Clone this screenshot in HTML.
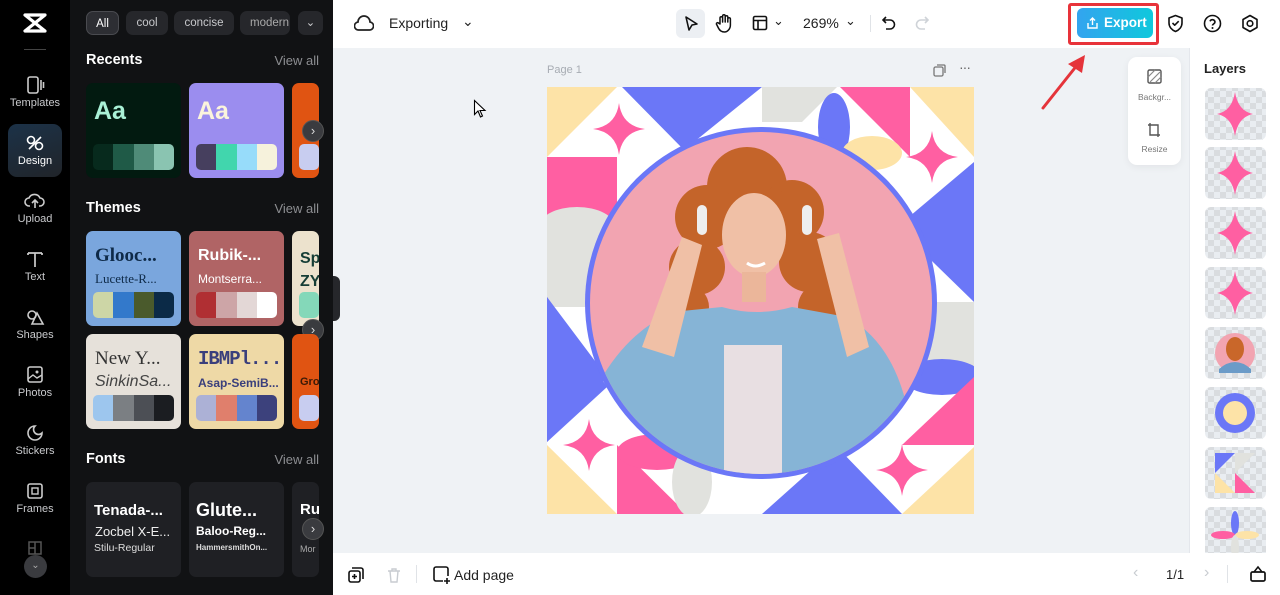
<!DOCTYPE html>
<html><head><meta charset="utf-8"><style>
*{margin:0;padding:0;box-sizing:border-box}
body{width:1280px;height:595px;overflow:hidden;font-family:"Liberation Sans",sans-serif;background:#eff2f5;position:relative}
.abs{position:absolute}
.rail{left:0;top:0;width:70px;height:595px;background:#000}
.ri{position:absolute;left:0;width:70px;text-align:center;color:#c9cacd;font-size:11px}
.ri svg{display:block;margin:0 auto 3px}
.panel{left:70px;top:0;width:263px;height:595px;background:#111214;overflow:hidden}
.chip{position:absolute;top:11px;height:24px;border-radius:7px;background:#26272b;color:#c8c9cc;font-size:11.5px;line-height:24px;text-align:center}
.h{position:absolute;left:16px;color:#fff;font-weight:bold;font-size:14.5px}
.va{position:absolute;right:14px;color:#8d8e92;font-size:13px}
.card{position:absolute;width:95px;height:95px;border-radius:7px;overflow:hidden}
.pal{position:absolute;left:7px;right:7px;bottom:8px;height:26px;border-radius:5px;overflow:hidden;display:flex}
.pal i{flex:1}
.nb{position:absolute;width:22px;height:22px;border-radius:50%;background:#3a3b3f;border:1px solid #555;color:#ddd;font-size:13px;line-height:19px;text-align:center}
.top{left:333px;top:0;width:947px;height:48px;background:#fff}
.bot{left:333px;top:553px;width:947px;height:42px;background:#fff}
.layers{left:1189px;top:48px;width:91px;height:505px;background:#fff;border-left:1px solid #e4e7ec}
.th{position:absolute;left:15px;width:61px;height:52px;border-radius:6px;background-color:#e9edf1;background-image:linear-gradient(45deg,#d9dcdf 25%,transparent 25%,transparent 75%,#d9dcdf 75%),linear-gradient(45deg,#d9dcdf 25%,transparent 25%,transparent 75%,#d9dcdf 75%);background-size:12px 12px;background-position:3px 3px,9px 9px}
</style></head><body>

<div class="abs rail">
  <svg class="abs" style="left:22px;top:12px" width="26" height="22" viewBox="0 0 26 22"><path d="M3 3h20L3 19h20Z" fill="none" stroke="#fff" stroke-width="3.2" stroke-linejoin="round"/></svg>
  <div class="abs" style="left:24px;top:49px;width:22px;height:1px;background:#444"></div>
  <div class="ri" style="top:76px"><svg width="20" height="18" viewBox="0 0 20 18"><rect x="3" y="1" width="10" height="16" rx="2" fill="none" stroke="#ccc" stroke-width="1.6"/><path d="M16 4v10M18.5 6v6" stroke="#ccc" stroke-width="1.6"/></svg>Templates</div>
  <div class="abs" style="left:8px;top:124px;width:54px;height:53px;border-radius:9px;background:linear-gradient(160deg,#1c3248,#202429)"></div>
  <div class="ri" style="top:134px;color:#fff"><svg width="20" height="18" viewBox="0 0 20 18"><circle cx="6" cy="6" r="3.5" fill="none" stroke="#fff" stroke-width="1.6"/><circle cx="14" cy="12" r="3.5" fill="none" stroke="#fff" stroke-width="1.6"/><path d="M4 15L16 3" stroke="#fff" stroke-width="1.6"/></svg>Design</div>
  <div class="ri" style="top:192px"><svg width="22" height="18" viewBox="0 0 22 18"><path d="M6 14H5a4 4 0 0 1 0-8 6 6 0 0 1 11 0 4 4 0 0 1 0 8h-1M11 16V8M8 11l3-3 3 3" fill="none" stroke="#ccc" stroke-width="1.6"/></svg>Upload</div>
  <div class="ri" style="top:250px"><svg width="20" height="18" viewBox="0 0 20 18"><path d="M3 3h14M10 3v14M3 3v2M17 3v2" stroke="#ccc" stroke-width="1.7" fill="none"/></svg>Text</div>
  <div class="ri" style="top:308px"><svg width="20" height="18" viewBox="0 0 20 18"><circle cx="7" cy="7" r="4" fill="none" stroke="#ccc" stroke-width="1.6"/><path d="M12 5l6 11H7z" fill="none" stroke="#ccc" stroke-width="1.6"/></svg>Shapes</div>
  <div class="ri" style="top:366px"><svg width="20" height="18" viewBox="0 0 20 18"><rect x="3" y="1" width="14" height="15" rx="2" fill="none" stroke="#ccc" stroke-width="1.6"/><path d="M3 13l5-4 4 3 5-3" fill="none" stroke="#ccc" stroke-width="1.4"/><circle cx="12" cy="6" r="1.5" fill="#ccc"/></svg>Photos</div>
  <div class="ri" style="top:424px"><svg width="20" height="18" viewBox="0 0 20 18"><path d="M17 9a7 7 0 1 1-7-7 4 4 0 0 0 7 7z" fill="none" stroke="#ccc" stroke-width="1.6"/></svg>Stickers</div>
  <div class="ri" style="top:482px"><svg width="20" height="18" viewBox="0 0 20 18"><rect x="3" y="2" width="14" height="14" rx="2" fill="none" stroke="#ccc" stroke-width="1.6"/><rect x="7" y="6" width="6" height="6" fill="none" stroke="#ccc" stroke-width="1.4"/></svg>Frames</div>
  <svg class="abs" style="left:28px;top:541px" width="14" height="14"><rect x="1" y="1" width="12" height="12" fill="none" stroke="#555" stroke-width="1.5"/><path d="M7 1v12M1 7h6" stroke="#555" stroke-width="1.5"/></svg>
  <div class="abs" style="left:24px;top:555px;width:23px;height:23px;border-radius:50%;background:#3a3b3f;color:#aaa;text-align:center;font-size:10px;line-height:22px">&#8964;</div>
</div>

<div class="abs panel">
  <div class="chip" style="left:16px;width:33px;background:#2d2e33;border:1px solid #4a4b50;color:#fff">All</div>
  <div class="chip" style="left:56px;width:42px">cool</div>
  <div class="chip" style="left:104px;width:60px">concise</div>
  <div class="chip" style="left:170px;width:50px;text-align:left;padding-left:10px;overflow:hidden;color:#aaa">modern</div>
  <div class="chip" style="left:228px;width:25px">&#8964;</div>

  <div class="h" style="top:52px">Recents</div><div class="va" style="top:53px">View all</div>
  <div class="card" style="left:16px;top:83px;background:#021a10"><div style="position:absolute;left:8px;top:14px;color:#a9f1d6;font-weight:bold;font-size:25px">Aa</div><div class="pal"><i style="background:#072a1d"></i><i style="background:#1f5a47"></i><i style="background:#4f8b78"></i><i style="background:#8ac4b1"></i></div></div>
  <div class="card" style="left:119px;top:83px;background:#9b8def"><div style="position:absolute;left:8px;top:14px;color:#fbf4dc;font-weight:bold;font-size:25px">Aa</div><div class="pal"><i style="background:#463f5e"></i><i style="background:#41d6ad"></i><i style="background:#97dcfa"></i><i style="background:#f6f2dc"></i></div></div>
  <div class="card" style="left:222px;top:83px;background:#e05412;width:27px"><div class="pal" style="right:0"><i style="background:#c8cdf0"></i></div></div>
  <div class="nb" style="left:232px;top:120px">&#8250;</div>

  <div class="h" style="top:200px">Themes</div><div class="va" style="top:201px">View all</div>
  <div class="card" style="left:16px;top:231px;background:#7aa6dd"><div style="position:absolute;left:9px;top:14px;color:#0e2a48;font-family:'Liberation Serif',serif;font-weight:bold;font-size:19px">Glooc...</div><div style="position:absolute;left:9px;top:40px;color:#0e2a48;font-family:'Liberation Serif',serif;font-size:13px">Lucette-R...</div><div class="pal"><i style="background:#cdd6a6"></i><i style="background:#3379cb"></i><i style="background:#4a5a2c"></i><i style="background:#0b2a47"></i></div></div>
  <div class="card" style="left:119px;top:231px;background:#b06465"><div style="position:absolute;left:9px;top:16px;color:#fff;font-weight:bold;font-size:16px">Rubik-...</div><div style="position:absolute;left:9px;top:41px;color:#fff;font-size:12px">Montserra...</div><div class="pal"><i style="background:#b02f33"></i><i style="background:#cda5a7"></i><i style="background:#e3d7d6"></i><i style="background:#fff"></i></div></div>
  <div class="card" style="left:222px;top:231px;background:#ece2cd;width:27px"><div style="position:absolute;left:8px;top:16px;color:#153d35;font-weight:bold;font-size:16px;line-height:23px">Sp<br>ZY</div><div class="pal" style="right:0"><i style="background:#84d8b9"></i></div></div>
  <div class="nb" style="left:232px;top:319px">&#8250;</div>
  <div class="card" style="left:16px;top:334px;background:#e6e1da"><div style="position:absolute;left:9px;top:14px;color:#333;font-family:'Liberation Serif',serif;font-size:19px">New Y...</div><div style="position:absolute;left:9px;top:39px;color:#444;font-style:italic;font-size:16px">SinkinSa...</div><div class="pal"><i style="background:#9dc6ee"></i><i style="background:#7b7f83"></i><i style="background:#4c4f55"></i><i style="background:#1b1d21"></i></div></div>
  <div class="card" style="left:119px;top:334px;background:#eed9a6"><div style="position:absolute;left:9px;top:14px;color:#3a3f7c;font-weight:bold;font-size:19px;font-family:'Liberation Mono',monospace;letter-spacing:-1px">IBMPl...</div><div style="position:absolute;left:9px;top:42px;color:#3a3f7c;font-weight:bold;font-size:12px">Asap-SemiB...</div><div class="pal"><i style="background:#acb1d6"></i><i style="background:#e07f6c"></i><i style="background:#6484ce"></i><i style="background:#3c417c"></i></div></div>
  <div class="card" style="left:222px;top:334px;background:#e05412;width:27px"><div style="position:absolute;left:8px;top:42px;color:#3a1a07;font-weight:bold;font-size:11px">Gro</div><div class="pal" style="right:0"><i style="background:#c8cdf0"></i></div></div>

  <div class="h" style="top:451px">Fonts</div><div class="va" style="top:452px">View all</div>
  <div class="card" style="left:16px;top:482px;background:#1f2024"><div style="position:absolute;left:8px;top:20px;color:#fff;font-weight:bold;font-size:15px">Tenada-...</div><div style="position:absolute;left:9px;top:42px;color:#eee;font-size:13px">Zocbel X-E...</div><div style="position:absolute;left:8px;top:60px;color:#ddd;font-size:10.5px">Stilu-Regular</div></div>
  <div class="card" style="left:119px;top:482px;background:#1f2024"><div style="position:absolute;left:7px;top:18px;color:#fff;font-weight:bold;font-size:18px">Glute...</div><div style="position:absolute;left:7px;top:42px;color:#fff;font-weight:bold;font-size:12px">Baloo-Reg...</div><div style="position:absolute;left:7px;top:61px;color:#ddd;font-weight:bold;font-size:8px">HammersmithOn...</div></div>
  <div class="card" style="left:222px;top:482px;background:#1f2024;width:27px"><div style="position:absolute;left:8px;top:19px;color:#fff;font-weight:bold;font-size:15px">Ru</div><div style="position:absolute;left:8px;top:62px;color:#aaa;font-size:9px">Mor</div></div>
  <div class="nb" style="left:232px;top:518px">&#8250;</div>
</div>
<div class="abs" style="left:333px;top:276px;width:7px;height:45px;background:#26272b;border-radius:0 6px 6px 0"></div>

<div class="abs top">
  <svg class="abs" style="left:21px;top:14px" width="20" height="18" viewBox="0 0 20 18"><path d="M5 16a4 4 0 0 1-1-8 6 6 0 0 1 12 0 4 4 0 0 1-1 8z" fill="none" stroke="#222" stroke-width="1.7"/></svg>
  <div class="abs" style="left:56px;top:15px;font-size:14px;color:#222">Exporting</div>
  <div class="abs" style="left:129px;top:13px;font-size:14px;color:#222">&#8964;</div>
  <div class="abs" style="left:343px;top:9px;width:29px;height:29px;border-radius:6px;background:#eceff3"></div>
  <svg class="abs" style="left:350px;top:15px" width="16" height="17" viewBox="0 0 16 17"><path d="M3 2l11 7-5 1-3 5z" fill="none" stroke="#111" stroke-width="1.6" stroke-linejoin="round"/></svg>
  <svg class="abs" style="left:382px;top:13px" width="18" height="20" viewBox="0 0 18 20"><path d="M5 11V5a1.3 1.3 0 0 1 2.6 0v4-6a1.3 1.3 0 0 1 2.6 0v6-5a1.3 1.3 0 0 1 2.6 0v5-3a1.3 1.3 0 0 1 2.6 0v6c0 4-3 7-6 7s-5-2-6-4l-2-4a1.2 1.2 0 0 1 2-1z" fill="none" stroke="#111" stroke-width="1.5" stroke-linejoin="round"/></svg>
  <svg class="abs" style="left:419px;top:15px" width="16" height="16" viewBox="0 0 16 16"><rect x="1.5" y="1.5" width="13" height="13" rx="1.5" fill="none" stroke="#111" stroke-width="1.6"/><path d="M1.5 5.5h13M6 5.5v9" stroke="#111" stroke-width="1.6"/></svg>
  <div class="abs" style="left:440px;top:13px;font-size:13px;color:#222">&#8964;</div>
  <div class="abs" style="left:470px;top:15px;font-size:14px;color:#222">269%</div>
  <div class="abs" style="left:512px;top:13px;font-size:13px;color:#222">&#8964;</div>
  <div class="abs" style="left:537px;top:15px;width:1px;height:17px;background:#e0e3e7"></div>
  <svg class="abs" style="left:548px;top:15px" width="16" height="16" viewBox="0 0 16 16"><path d="M5 2L2 5l3 3M2 5h7a4.5 4.5 0 0 1 0 9H5" fill="none" stroke="#111" stroke-width="1.6"/></svg>
  <svg class="abs" style="left:581px;top:15px" width="16" height="16" viewBox="0 0 16 16"><path d="M11 2l3 3-3 3M14 5H7a4.5 4.5 0 0 0 0 9h4" fill="none" stroke="#cfd3d8" stroke-width="1.6"/></svg>
  <div class="abs" style="left:735px;top:3px;width:91px;height:42px;border:3px solid #e8333a;border-radius:3px"></div>
  <div class="abs" style="left:744px;top:8px;width:76px;height:30px;border-radius:6px;background:linear-gradient(90deg,#33a4ef,#0fc8dc);color:#fff;font-weight:bold;font-size:13.5px;line-height:30px;padding-left:27px">Export</div>
  <svg class="abs" style="left:753px;top:16px" width="13" height="14" viewBox="0 0 13 14"><path d="M6.5 9V2M4 4.5l2.5-2.5L9 4.5M2 7v5h9V7" fill="none" stroke="#fff" stroke-width="1.4"/></svg>
  <svg class="abs" style="left:834px;top:14px" width="17" height="19" viewBox="0 0 17 19"><path d="M8.5 1.5l6.5 2.5v5c0 4-3 7-6.5 8.5C5 16 2 13 2 9V4z M5.5 9l2.2 2.2 4-4" fill="none" stroke="#111" stroke-width="1.6" stroke-linejoin="round"/></svg>
  <svg class="abs" style="left:870px;top:14px" width="19" height="19" viewBox="0 0 19 19"><circle cx="9.5" cy="9.5" r="8" fill="none" stroke="#111" stroke-width="1.6"/><path d="M7 7.3a2.6 2.6 0 0 1 5 .7c0 1.7-2.5 2-2.5 3.5" fill="none" stroke="#111" stroke-width="1.6"/><circle cx="9.5" cy="14" r="1" fill="#111"/></svg>
  <svg class="abs" style="left:908px;top:14px" width="18" height="19" viewBox="0 0 18 19"><path d="M9 1.5l7 4v8l-7 4-7-4v-8z" fill="none" stroke="#111" stroke-width="1.6" stroke-linejoin="round"/><circle cx="9" cy="9.5" r="2.8" fill="none" stroke="#111" stroke-width="1.6"/></svg>
</div>

<div class="abs" style="left:547px;top:64px;font-size:11px;color:#a7acb3">Page 1</div>
<svg class="abs" style="left:933px;top:64px" width="13" height="13" viewBox="0 0 13 13"><rect x="1" y="3" width="9" height="9" rx="1.5" fill="none" stroke="#777" stroke-width="1.3"/><path d="M4 1h7a1 1 0 0 1 1 1v7" fill="none" stroke="#777" stroke-width="1.3"/></svg>
<div class="abs" style="left:959px;top:59px;font-size:14px;color:#666;letter-spacing:-1px">&middot;&middot;&middot;</div>
<svg class="abs" style="left:473px;top:99px" width="14" height="20" viewBox="0 0 14 20"><path d="M1.5 1.5v14l3.5-3.5 2.5 6 2-1-2.5-5.5H12z" fill="#fff" stroke="#000" stroke-width="1.1"/></svg>
<svg class="abs" style="left:1038px;top:50px" width="52" height="64" viewBox="0 0 52 64"><path d="M5 58L40 14" stroke="#e5343a" stroke-width="3" stroke-linecap="round"/><path d="M47 5L30 14l14 9z" fill="#e5343a"/></svg>

<div class="abs" style="left:1128px;top:57px;width:53px;height:108px;background:#fff;border-radius:9px;box-shadow:0 2px 8px rgba(0,0,0,.06)"></div>
<svg class="abs" style="left:1147px;top:69px" width="15" height="15" viewBox="0 0 15 15"><rect x="1" y="1" width="13" height="13" rx="1.5" fill="none" stroke="#555" stroke-width="1.4"/><path d="M1 8l7-7M3 13l10-10M8 14l6-6" stroke="#888" stroke-width="1.2"/></svg>
<div class="abs" style="left:1130px;top:92px;width:49px;text-align:center;font-size:8.5px;color:#777">Backgr...</div>
<svg class="abs" style="left:1147px;top:122px" width="16" height="16" viewBox="0 0 16 16"><path d="M3 1v12h10M1 3h10v12" fill="none" stroke="#555" stroke-width="1.4"/></svg>
<div class="abs" style="left:1130px;top:144px;width:49px;text-align:center;font-size:8.5px;color:#777">Resize</div>

<svg class="abs" style="left:547px;top:87px" width="427" height="427" viewBox="0 0 427 427">
<defs>
 <path id="st" d="M0-26Q3-3 26 0Q3 3 0 26Q-3 3-26 0Q-3-3 0-26Z" fill="#ff5fa2"/>
 <clipPath id="cc"><circle cx="214" cy="216" r="171"/></clipPath>
</defs>
<rect width="427" height="427" fill="#fff"/>
<polygon points="0,0 70,0 0,70" fill="#fde3a7"/>
<polygon points="75,0 215,0 137,63" fill="#6b77f7"/>
<polygon points="215,0 290,0 255,35 215,35" fill="#e1e2de"/>
<polygon points="293,0 363,0 363,70" fill="#ff5fa2"/>
<polygon points="363,0 427,0 427,70" fill="#fde3a7"/>
<ellipse cx="287" cy="40" rx="16" ry="34" fill="#6b77f7"/>
<ellipse cx="325" cy="66" rx="30" ry="17" fill="#fde3a7"/>
<rect x="0" y="70" width="70" height="70" fill="#ff5fa2"/>
<ellipse cx="30" cy="140" rx="38" ry="20" fill="#e1e2de"/>
<rect x="0" y="145" width="55" height="75" fill="#e1e2de"/>
<polygon points="0,210 60,290 0,355" fill="#6b77f7"/>
<polygon points="0,210 0,355 60,300" fill="#6b77f7"/>
<polygon points="427,75 427,215 350,140" fill="#6b77f7"/>
<rect x="365" y="215" width="62" height="75" fill="#e1e2de"/>
<ellipse cx="395" cy="290" rx="40" ry="18" fill="#6b77f7"/>
<polygon points="427,290 427,358 355,358" fill="#ff5fa2"/>
<polygon points="0,358 0,427 70,427" fill="#fde3a7"/>
<polygon points="70,358 70,427 140,427" fill="#ff5fa2"/>
<ellipse cx="110" cy="365" rx="40" ry="18" fill="#ff5fa2"/>
<ellipse cx="145" cy="395" rx="20" ry="35" fill="#e1e2de"/>
<polygon points="215,427 355,427 290,360" fill="#6b77f7"/>
<polygon points="355,427 427,427 427,360" fill="#fde3a7"/>
<use href="#st" x="72" y="42"/><use href="#st" x="385" y="70"/><use href="#st" x="42" y="358"/><use href="#st" x="355" y="383"/>
<circle cx="214" cy="216" r="176" fill="#6b77f7"/>
<circle cx="214" cy="216" r="171" fill="#f2a4b1"/>
<g clip-path="url(#cc)">
 <g fill="#c4642a">
  <circle cx="200" cy="100" r="40"/><circle cx="160" cy="130" r="32"/><circle cx="245" cy="125" r="32"/>
  <circle cx="150" cy="180" r="28"/><circle cx="262" cy="175" r="30"/><circle cx="140" cy="220" r="22"/>
  <circle cx="275" cy="220" r="24"/><circle cx="170" cy="240" r="18"/><circle cx="250" cy="245" r="18"/>
 </g>
 <ellipse cx="207" cy="148" rx="32" ry="42" fill="#f0c0a6"/>
 <path d="M190 105q20-15 45 0q-5-25-25-25q-20 0-20 25z" fill="#c4642a"/>
 <path d="M195 185h24v30h-24z" fill="#ebb69a"/>
 <path d="M40 320q30-70 85-95l50-5q35 10 70 0l55 10q45 25 60 90v100H40z" fill="#86b4d6"/>
 <rect x="177" y="258" width="58" height="140" fill="#e8dfe2"/>
 <path d="M95 260l40-110 20 8-28 112z" fill="#f0c0a6"/>
 <path d="M300 270l-30-118 22-6 30 114z" fill="#f0c0a6"/>
 <rect x="150" y="118" width="10" height="30" rx="5" fill="#eee"/><rect x="255" y="118" width="10" height="30" rx="5" fill="#eee"/>
 <path d="M200 176q8 6 18 0" stroke="#fff" stroke-width="3" fill="none"/>
</g>
</svg>

<div class="abs layers">
  <div class="abs" style="left:14px;top:13px;font-size:13px;font-weight:bold;color:#222">Layers</div>
  <div class="th" style="top:40px"><svg width="61" height="52"><path transform="translate(30 26)" d="M0-22Q3-3 18 0Q3 3 0 22Q-3 3-18 0Q-3-3 0-22Z" fill="#ff5fa2"/></svg></div>
  <div class="th" style="top:99px"><svg width="61" height="52"><path transform="translate(30 26)" d="M0-22Q3-3 18 0Q3 3 0 22Q-3 3-18 0Q-3-3 0-22Z" fill="#ff5fa2"/></svg></div>
  <div class="th" style="top:159px"><svg width="61" height="52"><path transform="translate(30 26)" d="M0-22Q3-3 18 0Q3 3 0 22Q-3 3-18 0Q-3-3 0-22Z" fill="#ff5fa2"/></svg></div>
  <div class="th" style="top:219px"><svg width="61" height="52"><path transform="translate(30 26)" d="M0-22Q3-3 18 0Q3 3 0 22Q-3 3-18 0Q-3-3 0-22Z" fill="#ff5fa2"/></svg></div>
  <div class="th" style="top:279px"><svg width="61" height="52"><circle cx="30" cy="26" r="20" fill="#f2a4b1"/><ellipse cx="30" cy="22" rx="9" ry="12" fill="#c9672a"/><path d="M14 42q16-14 32 0v4H14z" fill="#6b9bc8"/></svg></div>
  <div class="th" style="top:339px"><svg width="61" height="52"><circle cx="30" cy="26" r="20" fill="#6b77f7"/><circle cx="30" cy="26" r="12" fill="#fde3a7"/></svg></div>
  <div class="th" style="top:399px"><svg width="61" height="52"><polygon points="10,6 30,6 10,26" fill="#6b77f7"/><polygon points="30,6 50,6 30,26" fill="#e1e2de"/><polygon points="10,26 10,46 30,46" fill="#fde3a7"/><polygon points="30,26 30,46 50,46" fill="#ff5fa2"/></svg></div>
  <div class="th" style="top:459px"><svg width="61" height="52"><ellipse cx="30" cy="16" rx="4" ry="12" fill="#6b77f7"/><ellipse cx="18" cy="28" rx="12" ry="4" fill="#ff5fa2"/><ellipse cx="42" cy="28" rx="12" ry="4" fill="#fde3a7"/><ellipse cx="30" cy="40" rx="4" ry="12" fill="#e1e2de"/></svg></div>
</div>

<div class="abs bot">
  <svg class="abs" style="left:15px;top:14px" width="16" height="16" viewBox="0 0 16 16"><rect x="1" y="4" width="11" height="11" rx="2" fill="none" stroke="#111" stroke-width="1.6"/><path d="M4 1h9a2 2 0 0 1 2 2v9M6.5 7v5M4 9.5h5" fill="none" stroke="#111" stroke-width="1.6"/></svg>
  <svg class="abs" style="left:54px;top:14px" width="14" height="16" viewBox="0 0 14 16"><path d="M1 4h12M5 4V2h4v2M3 4l1 11h6l1-11" fill="none" stroke="#c8ccd1" stroke-width="1.4"/></svg>
  <div class="abs" style="left:83px;top:12px;width:1px;height:18px;background:#e0e3e7"></div>
  <svg class="abs" style="left:100px;top:13px" width="18" height="18" viewBox="0 0 18 18"><path d="M10 15H3a2 2 0 0 1-2-2V3a2 2 0 0 1 2-2h10a2 2 0 0 1 2 2v7M14 12v6M11 15h6" fill="none" stroke="#111" stroke-width="1.6"/></svg>
  <div class="abs" style="left:121px;top:14px;font-size:14px;color:#222">Add page</div>
  <div class="abs" style="left:800px;top:11px;font-size:16px;color:#c8ccd1">&#8249;</div>
  <div class="abs" style="left:833px;top:14px;font-size:13px;color:#222">1/1</div>
  <div class="abs" style="left:871px;top:11px;font-size:16px;color:#c8ccd1">&#8250;</div>
  <div class="abs" style="left:894px;top:12px;width:1px;height:18px;background:#e0e3e7"></div>
  <svg class="abs" style="left:916px;top:12px" width="18" height="18" viewBox="0 0 18 18"><rect x="2" y="7" width="14" height="9" rx="1.5" fill="none" stroke="#111" stroke-width="1.7"/><path d="M5 7l4-5 4 5" fill="none" stroke="#111" stroke-width="1.5"/></svg>
</div>
</body></html>
